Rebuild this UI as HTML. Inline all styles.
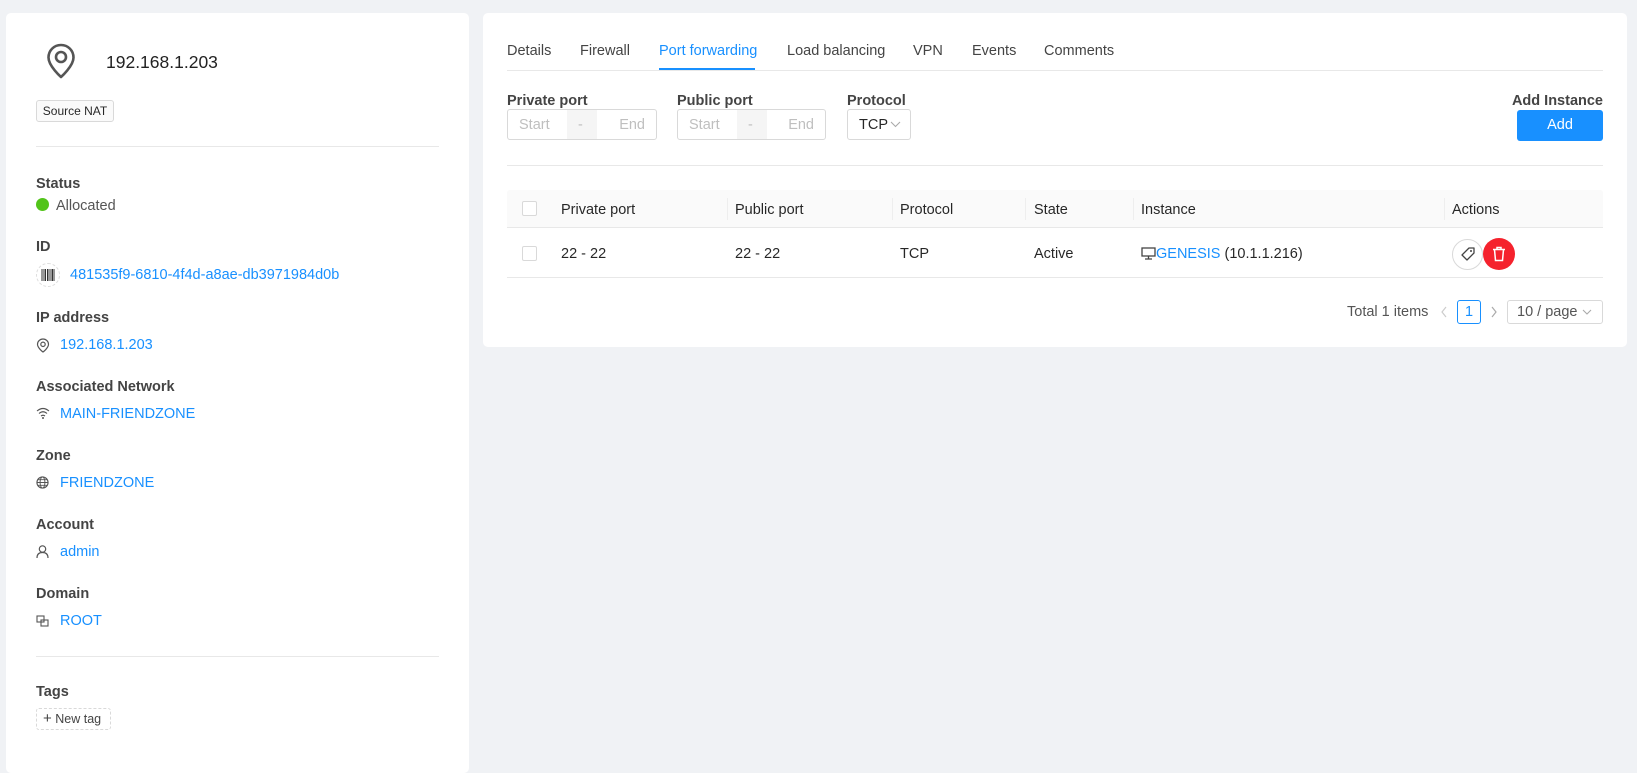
<!DOCTYPE html>
<html><head><meta charset="utf-8"><style>
*{box-sizing:border-box;margin:0;padding:0}
body{width:1637px;height:759px;background:#f0f2f5;font-family:"Liberation Sans",sans-serif;font-size:14.5px;color:rgba(0,0,0,.85);position:relative;overflow:hidden}
.a{position:absolute;white-space:nowrap;line-height:22px;height:22px}
.card{position:absolute;background:#fff;border-radius:5px}
.lbl{font-weight:bold;color:#444}
.lnk{color:#1890ff}
.hl{position:absolute;height:1px;background:#e8e8e8}
.inp{position:absolute;border:1px solid #d9d9d9;border-radius:3px;height:31px;background:#fff}
.ph{color:#bfbfbf}
svg{display:block}
</style></head><body>
<div class="card" style="left:6px;top:13px;width:463px;height:760px"></div>
<div class="card" style="left:483px;top:13px;width:1144px;height:334px"></div>

<!-- left -->
<svg class="a" style="left:45px;top:42px;width:32px;height:38px" viewBox="0 0 32 38"><path d="M16 3C9 3 3.5 8.5 3.5 15.5 3.5 24 16 35 16 35S28.5 24 28.5 15.5C28.5 8.5 23 3 16 3Z" fill="none" stroke="#555" stroke-width="2.6" stroke-linejoin="round"/><circle cx="16" cy="15" r="5" fill="none" stroke="#555" stroke-width="2.6"/></svg>
<div class="a" style="left:106px;top:50px;font-size:17.5px;height:24px;line-height:24px;color:#222">192.168.1.203</div>
<div class="a" style="left:36px;top:100px;width:78px;height:22px;border:1px solid #d9d9d9;border-radius:3px;background:#fafafa;font-size:12px;line-height:20px;text-align:center">Source NAT</div>
<div class="hl" style="left:36px;top:146px;width:403px"></div>

<div class="a lbl" style="left:36px;top:173px">Status</div>
<div class="a" style="left:36px;width:13px;height:13px;border-radius:50%;background:#52c41a;top:198px"></div>
<div class="a" style="left:56px;top:195px;color:#555">Allocated</div>

<div class="a lbl" style="left:36px;top:236px">ID</div>
<div class="a" style="left:36px;top:263px;width:24px;height:24px;border:1px dashed #ddd;border-radius:50%"></div>
<svg class="a" style="left:41px;top:269px;width:14px;height:12px" viewBox="0 0 14 12"><path d="M1 0v12M3 0v12M4.5 0v12M6.5 0v12M8 0v12M10 0v12M11.5 0v12M13 0v12" stroke="#333" stroke-width="1"/></svg>
<div class="a lnk" style="left:70px;top:264px">481535f9-6810-4f4d-a8ae-db3971984d0b</div>

<div class="a lbl" style="left:36px;top:307px">IP address</div>
<svg class="a" style="left:36px;top:338px;width:14px;height:15px" viewBox="0 0 14 15"><path d="M7 1C4 1 1.5 3.4 1.5 6.3 1.5 10 7 14 7 14S12.5 10 12.5 6.3C12.5 3.4 10 1 7 1Z" fill="none" stroke="#555" stroke-width="1.2"/><circle cx="7" cy="6.3" r="2.2" fill="none" stroke="#555" stroke-width="1.2"/></svg>
<div class="a lnk" style="left:60px;top:334px">192.168.1.203</div>

<div class="a lbl" style="left:36px;top:376px">Associated Network</div>
<svg class="a" style="left:36px;top:407px;width:14px;height:12px" viewBox="0 0 14 12"><path d="M1 4Q7 -1 13 4M3 6.5Q7 3 11 6.5M5 9Q7 7.5 9 9" fill="none" stroke="#555" stroke-width="1.1"/><circle cx="7" cy="11" r="1" fill="#555"/></svg>
<div class="a lnk" style="left:60px;top:403px">MAIN-FRIENDZONE</div>

<div class="a lbl" style="left:36px;top:445px">Zone</div>
<svg class="a" style="left:36px;top:476px;width:13px;height:13px" viewBox="0 0 14 14"><circle cx="7" cy="7" r="6" fill="none" stroke="#555" stroke-width="1.2"/><ellipse cx="7" cy="7" rx="2.6" ry="6" fill="none" stroke="#555" stroke-width="1"/><path d="M1 7h12M2 4h10M2 10h10" stroke="#555" stroke-width="1"/></svg>
<div class="a lnk" style="left:60px;top:472px">FRIENDZONE</div>

<div class="a lbl" style="left:36px;top:514px">Account</div>
<svg class="a" style="left:36px;top:545px;width:13px;height:13px" viewBox="0 0 13 13"><circle cx="6.5" cy="4" r="3.2" fill="none" stroke="#555" stroke-width="1.2"/><path d="M1 13Q1 7.5 6.5 7.5T12 13" fill="none" stroke="#555" stroke-width="1.2"/></svg>
<div class="a lnk" style="left:60px;top:541px">admin</div>

<div class="a lbl" style="left:36px;top:583px">Domain</div>
<svg class="a" style="left:36px;top:615px;width:13px;height:12px" viewBox="0 0 13 12"><rect x="1" y="1" width="7" height="6" fill="none" stroke="#555" stroke-width="1.1"/><rect x="5" y="5" width="7" height="6" fill="none" stroke="#555" stroke-width="1.1"/></svg>
<div class="a lnk" style="left:60px;top:610px">ROOT</div>

<div class="hl" style="left:36px;top:656px;width:403px"></div>
<div class="a lbl" style="left:36px;top:681px">Tags</div>
<div class="a" style="left:36px;top:708px;width:75px;height:22px;border:1px dashed #d9d9d9;border-radius:3px;font-size:12.5px;line-height:20px;padding-left:6px;color:#444"><span style="font-size:15px">+</span> New tag</div>

<!-- right -->
<div class="a" style="left:507px;top:40px;color:#444">Details</div>
<div class="a" style="left:580px;top:40px;color:#444">Firewall</div>
<div class="a" style="left:659px;top:40px;color:#1890ff">Port forwarding</div>
<div class="a" style="left:787px;top:40px;color:#444">Load balancing</div>
<div class="a" style="left:913px;top:40px;color:#444">VPN</div>
<div class="a" style="left:972px;top:40px;color:#444">Events</div>
<div class="a" style="left:1044px;top:40px;color:#444">Comments</div>
<div class="hl" style="left:507px;top:70px;width:1096px"></div>
<div style="position:absolute;left:659px;top:68px;width:96px;height:2px;background:#1890ff"></div>

<div class="a lbl" style="left:507px;top:90px">Private port</div>
<div class="a lbl" style="left:677px;top:90px">Public port</div>
<div class="a lbl" style="left:847px;top:90px">Protocol</div>
<div class="a lbl" style="right:34px;top:90px">Add Instance</div>

<div class="inp" style="left:507px;top:109px;width:150px"><div style="position:absolute;left:59px;top:0;width:30px;height:29px;background:#f5f5f5"></div><span class="a ph" style="left:11px;top:4px">Start</span><span class="a ph" style="left:70px;top:4px">-</span><span class="a ph" style="right:11px;top:4px">End</span></div>
<div class="inp" style="left:677px;top:109px;width:149px"><div style="position:absolute;left:59px;top:0;width:30px;height:29px;background:#f5f5f5"></div><span class="a ph" style="left:11px;top:4px">Start</span><span class="a ph" style="left:70px;top:4px">-</span><span class="a ph" style="right:11px;top:4px">End</span></div>
<div class="inp" style="left:847px;top:109px;width:64px"><span class="a" style="left:11px;top:4px">TCP</span><svg class="a" style="left:42px;top:11px;width:11px;height:7px" viewBox="0 0 11 7"><path d="M1 1l4.5 4.5L10 1" fill="none" stroke="#aaa" stroke-width="1.1"/></svg></div>
<div class="a" style="left:1517px;top:110px;width:86px;height:31px;background:#1890ff;border-radius:3px;color:#fff;text-align:center;line-height:31px">Add</div>

<div class="hl" style="left:507px;top:165px;width:1096px"></div>

<div style="position:absolute;left:507px;top:190px;width:1096px;height:38px;background:#fafafa;border-bottom:1px solid #e8e8e8;border-radius:3px 3px 0 0"></div>
<div style="position:absolute;left:522px;top:201px;width:15px;height:15px;border:1px solid #d9d9d9;border-radius:2px;background:#fff"></div>
<div class="a" style="left:561px;top:199px">Private port</div>
<div class="a" style="left:735px;top:199px">Public port</div>
<div class="a" style="left:900px;top:199px">Protocol</div>
<div class="a" style="left:1034px;top:199px">State</div>
<div class="a" style="left:1141px;top:199px">Instance</div>
<div class="a" style="left:1452px;top:199px">Actions</div>
<div style="position:absolute;left:727px;top:198px;width:1px;height:22px;background:#eee"></div>
<div style="position:absolute;left:892px;top:198px;width:1px;height:22px;background:#eee"></div>
<div style="position:absolute;left:1025px;top:198px;width:1px;height:22px;background:#eee"></div>
<div style="position:absolute;left:1133px;top:198px;width:1px;height:22px;background:#eee"></div>
<div style="position:absolute;left:1444px;top:198px;width:1px;height:22px;background:#eee"></div>

<div style="position:absolute;left:522px;top:246px;width:15px;height:15px;border:1px solid #d9d9d9;border-radius:2px"></div>
<div class="a" style="left:561px;top:243px">22 - 22</div>
<div class="a" style="left:735px;top:243px">22 - 22</div>
<div class="a" style="left:900px;top:243px">TCP</div>
<div class="a" style="left:1034px;top:243px">Active</div>
<svg class="a" style="left:1141px;top:247px;width:15px;height:13px" viewBox="0 0 15 13"><rect x="1" y="1" width="13" height="8" fill="none" stroke="#444" stroke-width="1.3"/><path d="M7.5 9v3M4 12h7" stroke="#444" stroke-width="1.3"/></svg>
<div class="a" style="left:1156px;top:243px"><span class="lnk">GENESIS</span> (10.1.1.216)</div>
<div class="a" style="left:1452px;top:239px;width:31px;height:31px;border:1px solid #d9d9d9;border-radius:50%;background:#fff"></div>
<svg class="a" style="left:1460px;top:246px;width:16px;height:16px" viewBox="0 0 16 16"><path d="M9 2h5v5l-7 7-5-5z" fill="none" stroke="#444" stroke-width="1.3" stroke-linejoin="round"/><circle cx="11" cy="5" r="1" fill="#444"/></svg>
<div class="a" style="left:1483px;top:238px;width:32px;height:32px;border-radius:50%;background:#f5222d"></div>
<svg class="a" style="left:1492px;top:246px;width:14px;height:16px" viewBox="0 0 14 16"><path d="M1 3.5h12M5 3.5V1.5h4v2M2.5 3.5l1 11h7l1-11" fill="none" stroke="#fff" stroke-width="1.5"/></svg>
<div class="hl" style="left:507px;top:277px;width:1096px"></div>

<div class="a" style="left:1347px;top:301px;color:#555">Total 1 items</div>
<svg class="a" style="left:1440px;top:306px;width:8px;height:12px" viewBox="0 0 8 12"><path d="M6 1L2 6l4 5" fill="none" stroke="#ccc" stroke-width="1.2"/></svg>
<div class="a" style="left:1457px;top:300px;width:24px;height:24px;border:1px solid #1890ff;border-radius:3px;color:#1890ff;text-align:center;line-height:22px">1</div>
<svg class="a" style="left:1490px;top:306px;width:8px;height:12px" viewBox="0 0 8 12"><path d="M2 1l4 5-4 5" fill="none" stroke="#aaa" stroke-width="1.2"/></svg>
<div class="a" style="left:1507px;top:300px;width:96px;height:24px;border:1px solid #d9d9d9;border-radius:3px;line-height:22px;padding-left:9px;color:#555">10 / page<svg style="position:absolute;right:10px;top:8px;width:10px;height:7px" viewBox="0 0 10 7"><path d="M1 1l4 4 4-4" fill="none" stroke="#aaa" stroke-width="1.1"/></svg></div>
</body></html>
